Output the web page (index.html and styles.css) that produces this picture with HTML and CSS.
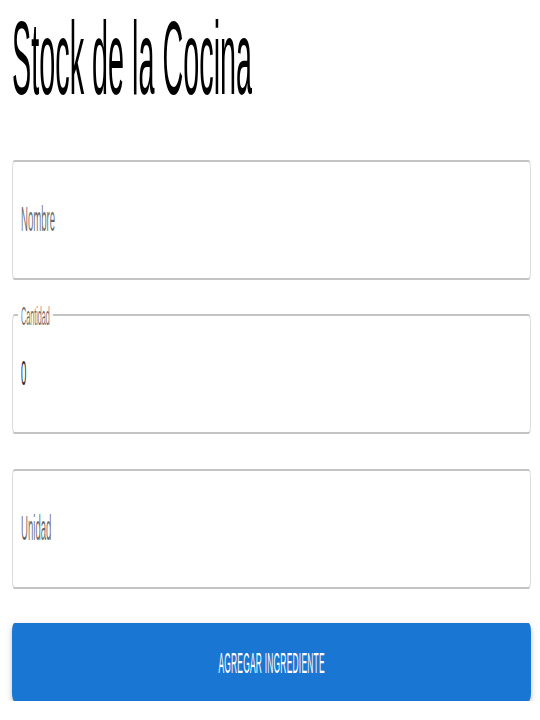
FILE: index.html
```html
<!DOCTYPE html>
<html lang="es">
<head>
<meta charset="utf-8">
<title>Stock de la Cocina</title>
<link rel="stylesheet" href="styles.css">
</head>
<body>
<main class="page">
  <h1 class="title"><span class="title-text">Stock de la Cocina</span></h1>
  <form class="form">
    <div class="field">
      <span class="txt placeholder">Nombre</span>
    </div>
    <div class="field">
      <span class="float-label">Cantidad</span>
      <span class="txt value">0</span>
    </div>
    <div class="field">
      <span class="txt placeholder">Unidad</span>
    </div>
    <button type="button" class="btn"><span class="btn-text">Agregar ingrediente</span></button>
  </form>
</main>
</body>
</html>
```
FILE: styles.css
```css
html, body {
  margin: 0;
  padding: 0;
  background: #ffffff;
}
body {
  font-family: "Liberation Sans", Arial, Helvetica, sans-serif;
}
.page {
  width: 540px;
  box-sizing: border-box;
  padding: 0 9px 0 12px;
}
.title {
  margin: 0 0 40px 0;
  height: 120px;
  font-size: 48px;
  line-height: 56px;
  font-weight: 400;
  color: #000000;
  white-space: nowrap;
}
.title-text {
  display: inline-block;
  transform: scale(0.6, 2.145);
  transform-origin: 0 0;
}
.form {
  display: flex;
  flex-direction: column;
  gap: 34.3px;
}
.field {
  position: relative;
  height: 120px;
  box-sizing: border-box;
  border-style: solid;
  border-width: 2px 1px;
  border-color: rgba(0, 0, 0, 0.23) rgba(0, 0, 0, 0.14);
  border-radius: 2.4px / 8.6px;
  display: flex;
  align-items: center;
  padding: 0 8.4px;
  font-size: 16px;
}
.txt {
  display: inline-block;
  line-height: 18px;
  transform: scale(0.6, 2.145);
  transform-origin: 0 50%;
  white-space: nowrap;
}
.placeholder {
  color: rgba(0, 0, 0, 0.6);
}
.value {
  color: rgba(0, 0, 0, 0.87);
}
.float-label {
  position: absolute;
  top: -6px;
  left: 4.8px;
  padding: 0 5px;
  background: #ffffff;
  font-size: 12px;
  line-height: 12px;
  color: rgba(0, 0, 0, 0.6);
  white-space: nowrap;
  transform: scale(0.6, 2.145);
  transform-origin: 0 50%;
}
.btn {
  height: 78.3px;
  border: none;
  border-radius: 2.4px / 8.6px;
  background: #1976d2;
  color: #ffffff;
  font-family: inherit;
  font-size: 14px;
  font-weight: 500;
  letter-spacing: 0.4px;
  text-transform: uppercase;
  box-shadow: 0 6px 2px -4px rgba(0,0,0,0.2), 0 4px 4px 0 rgba(0,0,0,0.14), 0 2px 8px 0 rgba(0,0,0,0.12);
}
.btn-text {
  display: inline-block;
  white-space: nowrap;
  transform: scale(0.6, 2.145);
  transform-origin: 50% 50%;
}
```
